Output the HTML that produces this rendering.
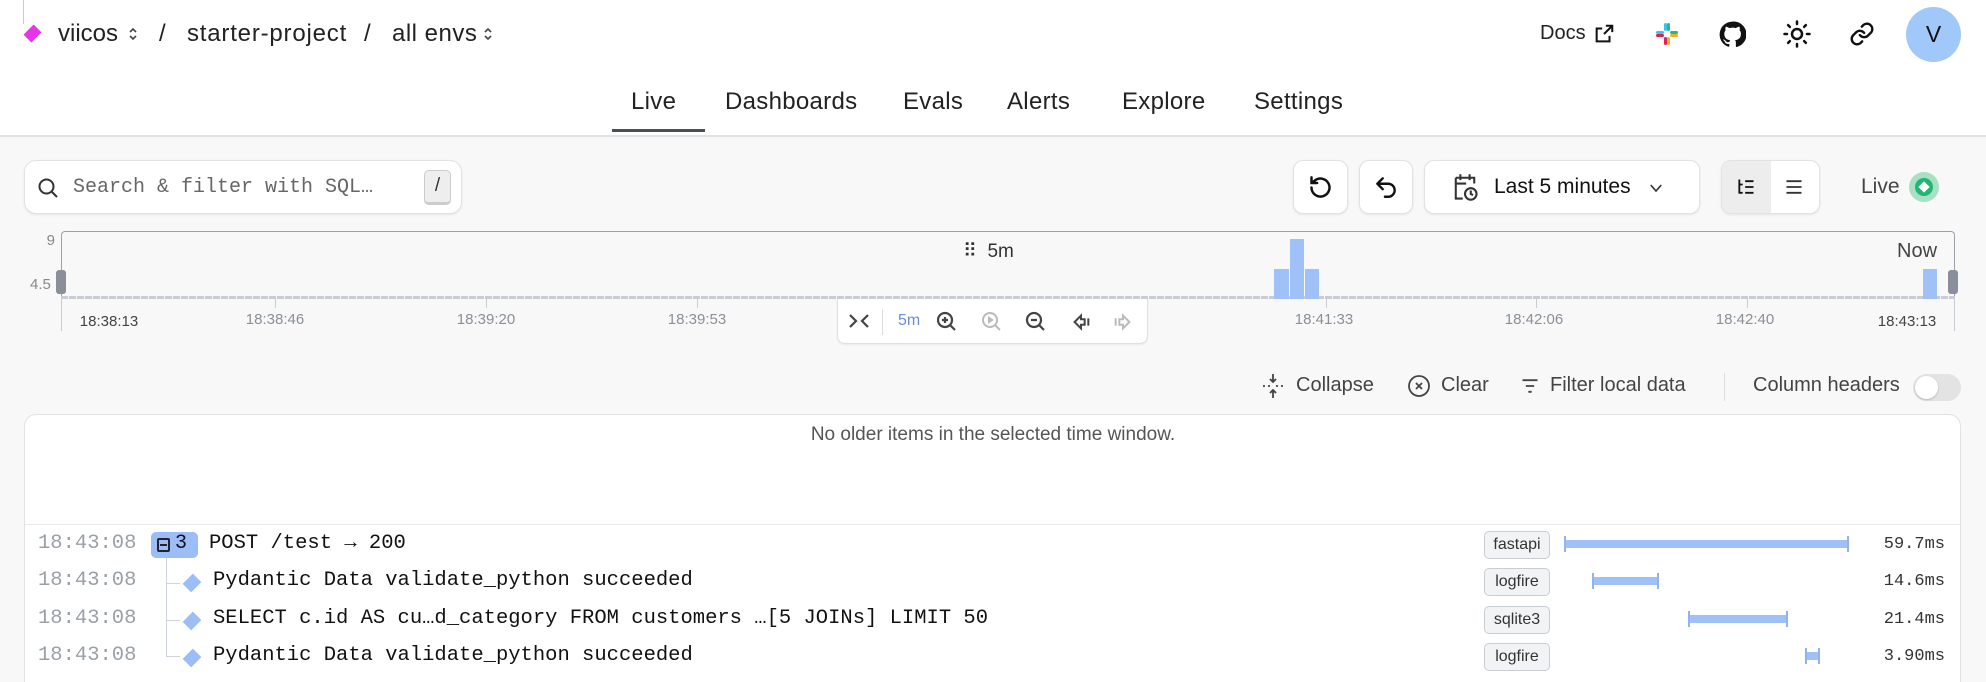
<!DOCTYPE html>
<html style="overflow:hidden;width:1986px;height:682px"><head><meta charset="utf-8"><style>
*{box-sizing:border-box;margin:0;padding:0}
body{width:1986px;height:682px;overflow:hidden;background:#f8f8f8;font-family:"Liberation Sans",sans-serif;color:#111;position:relative}
.a{position:absolute}
.hdr{left:0;top:0;width:1986px;height:137px;background:#fff;border-bottom:2px solid #e2e2e4}
.t{font-size:23px;color:#222}
.tab{font-size:24px;color:#222;letter-spacing:.3px}
.btn{background:#fff;border:1px solid #e2e2e6;border-radius:10px;box-shadow:0 1px 2px rgba(0,0,0,.08)}
.mono{font-family:"Liberation Mono",monospace}
.tick{color:#8a8f98;font-size:15px;top:311px;transform:translateX(-50%)}
.tm{width:1px;height:9px;background:#c8ccd4;top:299px}
.ts{left:38px;font-size:20.5px;color:#9aa0a8}
.msg{font-size:20.5px;color:#111}
.tag{left:1484px;width:66px;height:28px;border:1px solid #c9ccd2;background:#f2f3f5;border-radius:5px;font-size:16px;color:#333;text-align:center;line-height:26px}
.bar{height:8px;background:#a0c0f8;border-left:2px solid #90b2f0;border-right:2px solid #90b2f0;outline:0}
.bar::before,.bar::after{content:"";position:absolute;top:-4px;width:2px;height:16px;background:#90b2f0}
.bar::before{left:-2px}.bar::after{right:-2px}
.dur{right:41px;font-size:17px;color:#333}
.dia{width:12px;height:12px;background:#9dbdf7;transform:rotate(45deg) scaleY(1.2)}
</style></head><body>
<div class="a hdr"></div>
<div class="a" style="left:23px;top:0;width:1px;height:24px;background:#ccc"></div>
<div class="a" style="left:27px;top:28px;width:11px;height:11px;background:#e535e8;transform:rotate(45deg) scaleY(1.3)"></div>
<div class="a t" style="left:58px;top:20px;font-size:24px">viicos</div>
<svg class="a" style="left:128px;top:26px" width="10" height="16" viewBox="0 0 10 16" fill="none" stroke="#444" stroke-width="1.6"><path d="M2 6l3-3 3 3M2 10l3 3 3-3"/></svg>
<div class="a t" style="left:159px;top:20px;font-size:24px">/</div>
<div class="a t" style="left:187px;top:20px;font-size:24px;letter-spacing:.8px">starter-project</div>
<div class="a t" style="left:364px;top:20px;font-size:24px">/</div>
<div class="a t" style="left:392px;top:20px;font-size:24px;letter-spacing:.5px">all envs</div>
<svg class="a" style="left:483px;top:26px" width="10" height="16" viewBox="0 0 10 16" fill="none" stroke="#444" stroke-width="1.6"><path d="M2 6l3-3 3 3M2 10l3 3 3-3"/></svg>
<div class="a t" style="left:1540px;top:22px;font-size:20px">Docs</div>
<svg class="a" style="left:1593px;top:23px" width="22" height="22" viewBox="0 0 24 24" fill="none" stroke="#111" stroke-width="2.2"><path d="M14 3h7v7M21 3l-9 9M18 14v6H4V6h6"/></svg>
<svg class="a" style="left:1655px;top:22px" width="24" height="24" viewBox="0 0 24 24"><rect x="1" y="9" width="8" height="3" rx="1.5" fill="#36c5f0"/><rect x="9" y="1" width="3" height="8" rx="1.5" fill="#36c5f0"/><rect x="12" y="1" width="3" height="8" rx="1.5" fill="#2eb67d"/><rect x="15" y="9" width="8" height="3" rx="1.5" fill="#2eb67d"/><rect x="9" y="15" width="3" height="8" rx="1.5" fill="#e01e5a"/><rect x="1" y="12" width="8" height="3" rx="1.5" fill="#e01e5a"/><rect x="15" y="12" width="8" height="3" rx="1.5" fill="#ecb22e"/><rect x="12" y="15" width="3" height="8" rx="1.5" fill="#ecb22e"/></svg>
<svg class="a" style="left:1719px;top:21px" width="27" height="27" viewBox="0 0 24 24"><path fill="#111" d="M12 .5a11.5 11.5 0 0 0-3.6 22.4c.6.1.8-.3.8-.6v-2c-3.2.7-3.9-1.5-3.9-1.5-.5-1.3-1.3-1.7-1.3-1.7-1-.7.1-.7.1-.7 1.2.1 1.8 1.2 1.8 1.200 1 1.8 2.7 1.3 3.4 1 .1-.8.4-1.3.7-1.6-2.6-.3-5.3-1.3-5.3-5.7 0-1.3.5-2.3 1.2-3.1-.1-.3-.5-1.5.1-3.1 0 0 1-.3 3.2 1.2a11 11 0 0 1 5.8 0c2.2-1.5 3.2-1.2 3.2-1.2.6 1.6.2 2.8.1 3.1.8.8 1.2 1.9 1.2 3.1 0 4.4-2.7 5.4-5.3 5.7.4.4.8 1.1.8 2.2v3.3c0 .3.2.7.8.6A11.5 11.5 0 0 0 12 .5z"/></svg>
<svg class="a" style="left:1782px;top:19px" width="30" height="30" viewBox="0 0 24 24" fill="none" stroke="#111" stroke-width="2" stroke-linecap="round"><circle cx="12" cy="12" r="4"/><path d="M12 2v2M12 20v2M2 12h2M20 12h2M4.9 4.9l1.4 1.4M17.7 17.7l1.4 1.4M4.9 19.1l1.4-1.4M17.7 6.3l1.4-1.4"/></svg>
<svg class="a" style="left:1849px;top:21px" width="26" height="26" viewBox="0 0 24 24" fill="none" stroke="#111" stroke-width="2.2" stroke-linecap="round"><path d="M10 13a5 5 0 0 0 7.5.5l3-3a5 5 0 0 0-7-7l-1.7 1.7M14 11a5 5 0 0 0-7.5-.5l-3 3a5 5 0 0 0 7 7l1.7-1.7"/></svg>
<div class="a" style="left:1906px;top:7px;width:55px;height:55px;border-radius:50%;background:#a0c8fa;text-align:center;line-height:55px;font-size:23px">V</div>
<div class="a tab" style="left:631px;top:88px">Live</div>
<div class="a tab" style="left:725px;top:88px">Dashboards</div>
<div class="a tab" style="left:903px;top:88px">Evals</div>
<div class="a tab" style="left:1007px;top:88px">Alerts</div>
<div class="a tab" style="left:1122px;top:88px">Explore</div>
<div class="a tab" style="left:1254px;top:88px">Settings</div>
<div class="a" style="left:612px;top:129px;width:93px;height:3px;background:#474e5c"></div>

<div class="a btn" style="left:24px;top:160px;width:438px;height:54px;border-radius:12px"></div>
<svg class="a" style="left:36px;top:176px" width="24" height="24" viewBox="0 0 24 24" fill="none" stroke="#333" stroke-width="2"><circle cx="10.5" cy="10.5" r="7"/><path d="M16 16l5 5"/></svg>
<div class="a mono" style="left:73px;top:176px;font-size:20px;color:#666">Search &amp; filter with SQL…</div>
<div class="a" style="left:424px;top:170px;width:27px;height:35px;background:#eee;border:1px solid #ccc;border-bottom-width:3px;border-radius:5px;text-align:center;line-height:30px;font-size:19px;color:#333">/</div>

<div class="a btn" style="left:1293px;top:160px;width:55px;height:54px"></div>
<svg class="a" style="left:1307px;top:174px" width="27" height="27" viewBox="0 0 24 24" fill="none" stroke="#111" stroke-width="2.2" stroke-linecap="round"><path d="M4 12a8 8 0 1 0 3-6.2L4 8M4 3v5h5"/></svg>
<div class="a btn" style="left:1359px;top:160px;width:54px;height:54px"></div>
<svg class="a" style="left:1373px;top:174px" width="26" height="26" viewBox="0 0 24 24" fill="none" stroke="#111" stroke-width="2.2" stroke-linecap="round" stroke-linejoin="round"><path d="M9 14L4 9l5-5M4 9h10a6 6 0 0 1 0 12h-3"/></svg>
<div class="a btn" style="left:1424px;top:160px;width:276px;height:54px"></div>
<svg class="a" style="left:1451px;top:172px" width="28" height="30" viewBox="0 0 24 26" fill="none" stroke="#333" stroke-width="1.8"><path d="M4 5h16v5M4 5v18h6M8 2v5M16 2v5M4 10h9"/><circle cx="17" cy="19" r="5"/><path d="M17 16v3l2 1"/></svg>
<div class="a" style="left:1494px;top:175px;font-size:21px;color:#111">Last 5 minutes</div>
<svg class="a" style="left:1647px;top:179px" width="18" height="18" viewBox="0 0 24 24" fill="none" stroke="#333" stroke-width="2.2"><path d="M5 8l7 8 7-8"/></svg>
<div class="a btn" style="left:1721px;top:160px;width:99px;height:54px;overflow:hidden"><div style="width:49px;height:54px;background:#ededed"></div></div>
<svg class="a" style="left:1736px;top:177px" width="20" height="20" viewBox="0 0 24 24" fill="none" stroke="#111" stroke-width="2.2"><path d="M4 3v17M4 9h4M4 19h4M11 5h10M11 12h10M11 19h10"/></svg>
<svg class="a" style="left:1784px;top:177px" width="20" height="20" viewBox="0 0 24 24" fill="none" stroke="#333" stroke-width="2.2"><path d="M3 5h18M3 12h18M3 19h18"/></svg>
<div class="a" style="left:1861px;top:175px;font-size:21px;color:#444">Live</div>
<div class="a" style="left:1909px;top:172px;width:30px;height:30px;border-radius:50%;background:#a8e0c4"></div>
<div class="a" style="left:1915px;top:178px;width:18px;height:18px;border-radius:50%;background:#22b573"></div>
<div class="a" style="left:1920px;top:183px;width:8px;height:8px;background:#fff;transform:rotate(45deg)"></div>

<!-- chart -->
<div class="a" style="left:61px;top:231px;width:1894px;height:68px;border:1px solid #9aa0ac;border-bottom:none;border-radius:4px 4px 0 0"></div>
<div class="a" style="left:61px;top:296px;width:1894px;height:3px;background:repeating-linear-gradient(90deg,#c9ccd4 0 7px,transparent 7px 8px)"></div>
<div class="a" style="left:45px;top:232px;font-size:15px;color:#888;width:10px;text-align:right">9</div>
<div class="a" style="left:30px;top:276px;font-size:15px;color:#888">4.5</div>
<div class="a" style="left:56px;top:270px;width:10px;height:24px;border-radius:3px;background:#8a8f9a"></div>
<div class="a" style="left:1948px;top:270px;width:10px;height:24px;border-radius:3px;background:#8a8f9a"></div>
<div class="a" style="left:963px;top:240px;font-size:19px;color:#333">⠿&nbsp; 5m</div>
<div class="a" style="left:1897px;top:240px;font-size:20px;color:#444">Now</div>
<div class="a" style="left:1274px;top:269px;width:15px;height:30px;background:#a0c0f8"></div>
<div class="a" style="left:1290px;top:239px;width:14px;height:60px;background:#a0c0f8"></div>
<div class="a" style="left:1305px;top:269px;width:14px;height:30px;background:#a0c0f8"></div>
<div class="a" style="left:1923px;top:269px;width:14px;height:30px;background:#a0c0f8"></div>
<div class="a tm" style="left:61px;height:32px"></div>
<div class="a tm" style="left:275px"></div><div class="a tm" style="left:486px"></div><div class="a tm" style="left:697px"></div>
<div class="a tm" style="left:1326px"></div><div class="a tm" style="left:1536px"></div><div class="a tm" style="left:1747px"></div>
<div class="a tm" style="left:1954px;height:32px"></div>
<div class="a tick" style="left:109px;color:#444;top:313px">18:38:13</div>
<div class="a tick" style="left:275px">18:38:46</div>
<div class="a tick" style="left:486px">18:39:20</div>
<div class="a tick" style="left:697px">18:39:53</div>
<div class="a tick" style="left:1324px">18:41:33</div>
<div class="a tick" style="left:1534px">18:42:06</div>
<div class="a tick" style="left:1745px">18:42:40</div>
<div class="a tick" style="left:1907px;color:#444;top:313px">18:43:13</div>

<div class="a" style="left:837px;top:299px;width:311px;height:45px;background:#fff;border:1px solid #e0e0e4;border-top:none;border-radius:0 0 8px 8px;box-shadow:0 1px 2px rgba(0,0,0,.06)"></div>
<svg class="a" style="left:848px;top:313px" width="22" height="16" viewBox="0 0 22 16" fill="none" stroke="#444" stroke-width="2.2"><path d="M2 2l6 6-6 6M20 2l-6 6 6 6"/></svg>
<div class="a" style="left:882px;top:309px;width:1px;height:26px;background:#ddd"></div>
<div class="a" style="left:898px;top:312px;font-size:16px;color:#6b8fd0">5m</div>
<svg class="a" style="left:935px;top:310px" width="24" height="24" viewBox="0 0 24 24" fill="none" stroke="#444" stroke-width="2.2"><circle cx="10" cy="10" r="7"/><path d="M15 15l5 5M10 7v6M7 10h6"/></svg>
<svg class="a" style="left:980px;top:310px" width="24" height="24" viewBox="0 0 24 24" fill="none" stroke="#bbb" stroke-width="2"><circle cx="10" cy="10" r="7"/><path d="M15 15l5 5M9 8l3 2-3 2z"/></svg>
<svg class="a" style="left:1024px;top:310px" width="24" height="24" viewBox="0 0 24 24" fill="none" stroke="#444" stroke-width="2.2"><circle cx="10" cy="10" r="7"/><path d="M15 15l5 5M7 10h6"/></svg>
<svg class="a" style="left:1070px;top:311px" width="22" height="22" viewBox="0 0 24 24" fill="none" stroke="#444" stroke-width="2.2"><path d="M12 5L5 12l7 7v-4h4V9h-4zM20 8v8"/></svg>
<svg class="a" style="left:1112px;top:311px" width="22" height="22" viewBox="0 0 24 24" fill="none" stroke="#bbb" stroke-width="2.2"><path d="M12 5l7 7-7 7v-4H8V9h4zM4 8v8"/></svg>

<!-- actions -->
<svg class="a" style="left:1261px;top:373px" width="24" height="26" viewBox="0 0 24 26" fill="none" stroke="#444" stroke-width="1.8"><path d="M12 1v8M9 6l3 3 3-3M12 25v-8M9 20l3-3 3 3M2 13h2M7 13h2M15 13h2M20 13h2"/></svg>
<div class="a" style="left:1296px;top:374px;font-size:20px;color:#444">Collapse</div>
<svg class="a" style="left:1407px;top:374px" width="24" height="24" viewBox="0 0 24 24" fill="none" stroke="#444" stroke-width="1.8"><circle cx="12" cy="12" r="10"/><path d="M9 9l6 6M15 9l-6 6"/></svg>
<div class="a" style="left:1441px;top:374px;font-size:20px;color:#444">Clear</div>
<svg class="a" style="left:1520px;top:376px" width="20" height="20" viewBox="0 0 24 24" fill="none" stroke="#444" stroke-width="2.2"><path d="M3 5h18M7 12h10M10 19h4"/></svg>
<div class="a" style="left:1550px;top:374px;font-size:20px;color:#444">Filter local data</div>
<div class="a" style="left:1724px;top:373px;width:1px;height:28px;background:#ddd"></div>
<div class="a" style="left:1753px;top:374px;font-size:20px;color:#444">Column headers</div>
<div class="a" style="left:1913px;top:374px;width:48px;height:27px;border-radius:14px;background:#e3e3e3"></div>
<div class="a" style="left:1915px;top:376px;width:23px;height:23px;border-radius:50%;background:#fff;box-shadow:0 1px 2px rgba(0,0,0,.2)"></div>

<!-- panel -->
<div class="a" style="left:24px;top:414px;width:1937px;height:290px;background:#fff;border:1px solid #e2e2e6;border-radius:12px"></div>
<div class="a" style="left:0;top:424px;width:1986px;text-align:center;font-size:19px;color:#555">No older items in the selected time window.</div>
<div class="a" style="left:25px;top:524px;width:1935px;height:1px;background:#e8e8ea"></div>

<div class="a" style="left:166px;top:557px;width:1px;height:100px;background:#cfd3da"></div>
<div class="a" style="left:166px;top:583px;width:14px;height:1px;background:#cfd3da"></div>
<div class="a" style="left:166px;top:620px;width:14px;height:1px;background:#cfd3da"></div>
<div class="a" style="left:166px;top:656px;width:14px;height:1px;background:#cfd3da"></div>

<div class="a mono ts" style="top:532px">18:43:08</div>
<div class="a" style="left:151px;top:532px;width:47px;height:26px;border-radius:5px;background:#9dbdf7"></div>
<div class="a" style="left:157px;top:538px;width:13px;height:14px;border:2px solid #223;border-radius:2px"></div>
<div class="a" style="left:160px;top:544px;width:7px;height:2px;background:#223"></div>
<div class="a mono" style="left:175px;top:532px;font-size:20px;color:#112">3</div>
<div class="a mono msg" style="left:209px;top:532px">POST /test → 200</div>
<div class="a tag" style="top:531px">fastapi</div>
<div class="a bar" style="left:1564px;top:540px;width:285px"></div>
<div class="a mono dur" style="top:535px">59.7ms</div>

<div class="a mono ts" style="top:569px">18:43:08</div>
<div class="a dia" style="left:186px;top:577px"></div>
<div class="a mono msg" style="left:213px;top:569px">Pydantic Data validate_python succeeded</div>
<div class="a tag" style="top:568px">logfire</div>
<div class="a bar" style="left:1592px;top:577px;width:67px"></div>
<div class="a mono dur" style="top:572px">14.6ms</div>

<div class="a mono ts" style="top:607px">18:43:08</div>
<div class="a dia" style="left:186px;top:615px"></div>
<div class="a mono msg" style="left:213px;top:607px">SELECT c.id AS cu…d_category FROM customers …[5 JOINs] LIMIT 50</div>
<div class="a tag" style="top:606px">sqlite3</div>
<div class="a bar" style="left:1688px;top:615px;width:100px"></div>
<div class="a mono dur" style="top:610px">21.4ms</div>

<div class="a mono ts" style="top:644px">18:43:08</div>
<div class="a dia" style="left:186px;top:652px"></div>
<div class="a mono msg" style="left:213px;top:644px">Pydantic Data validate_python succeeded</div>
<div class="a tag" style="top:643px">logfire</div>
<div class="a bar" style="left:1805px;top:652px;width:15px"></div>
<div class="a mono dur" style="top:647px">3.90ms</div>
</body></html>
